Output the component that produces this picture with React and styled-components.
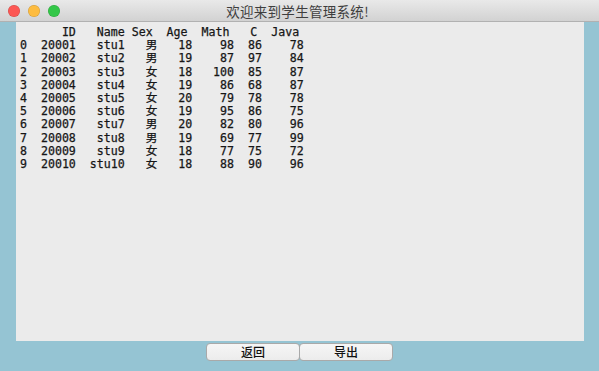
import React from "react";
import styled, { createGlobalStyle } from "styled-components";

const GlobalStyle = createGlobalStyle`
  html, body {
    margin: 0;
    padding: 0;
    background: #95c4d3;
  }
`;

const Window = styled.div`
  width: 599px;
  height: 371px;
  display: flex;
  flex-direction: column;
  background: #95c4d3;
  overflow: hidden;
`;

const TitleBar = styled.div`
  height: 21px;
  display: grid;
  grid-template-columns: 1fr auto 1fr;
  align-items: center;
  background: linear-gradient(#e9e9e9, #d2d2d2);
  border-bottom: 1px solid #b1b1b1;
`;

const Lights = styled.div`
  display: flex;
  gap: 8px;
  padding-left: 8px;
`;

const Light = styled.span`
  width: 12px;
  height: 12px;
  border-radius: 50%;
  background: ${(p) => p.$color};
  box-shadow: inset 0 0 0 0.5px rgba(0, 0, 0, 0.18);
`;

const Title = styled.div`
  font-family: "Noto Sans CJK SC", "DejaVu Sans", sans-serif;
  font-size: 13.5px;
  color: #3e3e3e;
  letter-spacing: 0.3px;
  margin-right: 4px;
`;

const Body = styled.div`
  flex: 1;
  display: flex;
  flex-direction: column;
`;

// 표처럼 보이는 텍스트 영역
const TextArea = styled.pre`
  margin: 0 15px 0 16px;
  height: 319px;
  box-sizing: border-box;
  padding: 4px 0 0 4px;
  background: #ebebeb;
  font-family: "DejaVu Sans Mono", "Noto Sans CJK SC", monospace;
  font-size: 11.6px;
  line-height: 13.2px;
  color: #161616;
  -webkit-text-stroke: 0.25px #161616;
  white-space: pre;
  overflow: hidden;
`;

const ButtonRow = styled.div`
  display: flex;
  justify-content: center;
  padding-top: 2px;
`;

const Button = styled.button`
  width: 94px;
  height: 18px;
  margin: 0 -0.5px;
  padding: 0;
  border: 1px solid #a9a9a9;
  border-radius: 4px;
  background: linear-gradient(#f6f6f6, #ececec);
  font-family: "Noto Sans CJK SC", sans-serif;
  font-size: 12px;
  font-weight: 500;
  line-height: 16px;
  color: #111;
`;

const rows = [
  [20001, "stu1", "男", 18, 98, 86, 78],
  [20002, "stu2", "男", 19, 87, 97, 84],
  [20003, "stu3", "女", 18, 100, 85, 87],
  [20004, "stu4", "女", 19, 86, 68, 87],
  [20005, "stu5", "女", 20, 79, 78, 78],
  [20006, "stu6", "女", 19, 95, 86, 75],
  [20007, "stu7", "男", 20, 82, 80, 96],
  [20008, "stu8", "男", 19, 69, 77, 99],
  [20009, "stu9", "女", 18, 77, 75, 72],
  [20010, "stu10", "女", 18, 88, 90, 96],
];

const pad = (v, n) => String(v).padStart(n, " ");

const header = "      ID   Name Sex  Age  Math   C  Java";
const lines = rows.map(
  ([id, name, sex, age, math, c, java], i) =>
    `${i}  ${id}  ${pad(name, 5)} ${pad(sex, 3)}  ${pad(age, 3)}  ${pad(math, 4)}  ${pad(c, 2)}  ${pad(java, 4)}`
);

export default function App() {
  return (
    <>
      <GlobalStyle />
      <Window>
        <TitleBar>
          <Lights>
            <Light $color="#fc5753" />
            <Light $color="#fdbc40" />
            <Light $color="#33c748" />
          </Lights>
          <Title>欢迎来到学生管理系统!</Title>
          <div />
        </TitleBar>
        <Body>
          <TextArea>{[header, ...lines].join("\n")}</TextArea>
          <ButtonRow>
            <Button>返回</Button>
            <Button>导出</Button>
          </ButtonRow>
        </Body>
      </Window>
    </>
  );
}
